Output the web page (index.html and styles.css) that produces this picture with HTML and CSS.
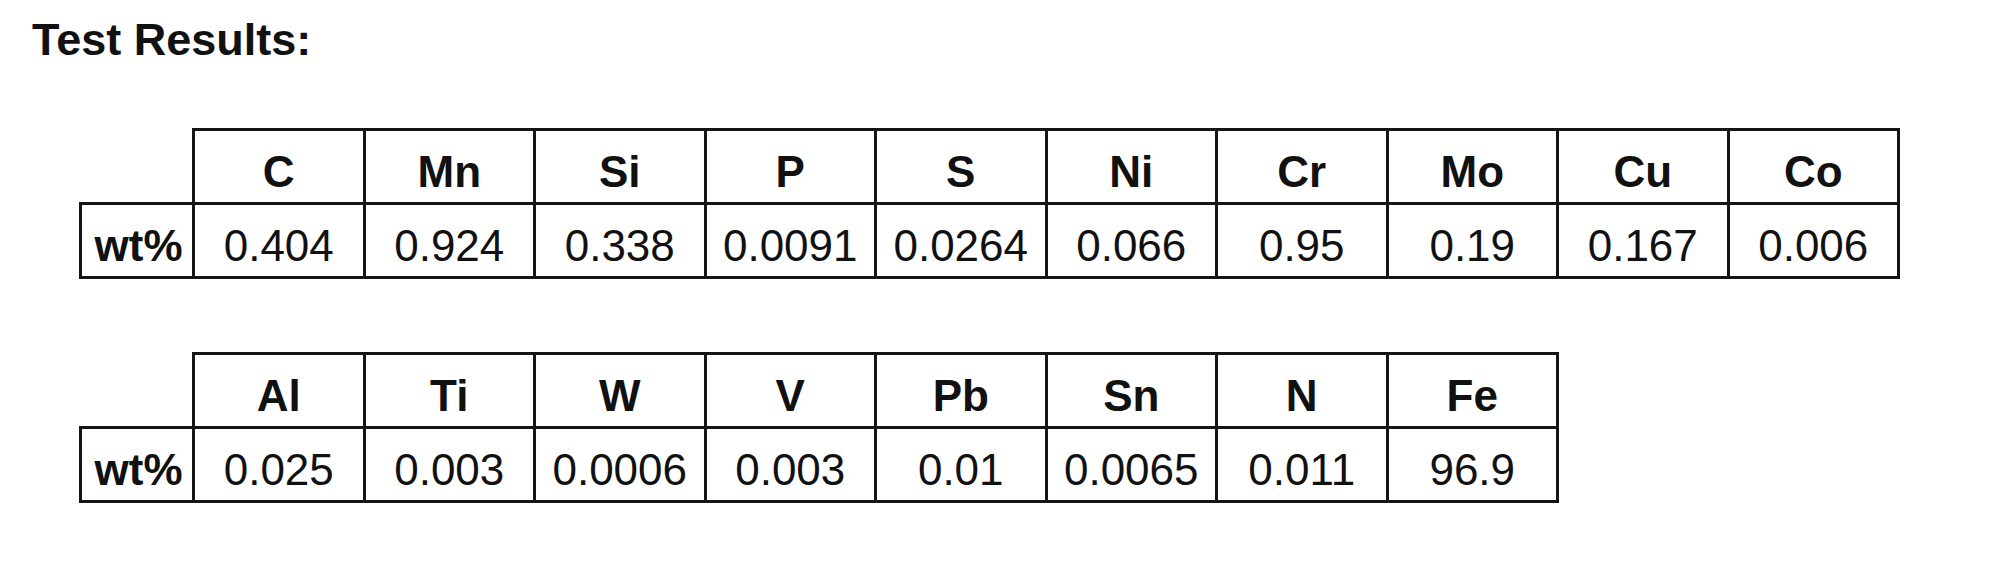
FILE: index.html
```html
<!DOCTYPE html>
<html lang="en">
<head>
<meta charset="utf-8">
<title>Test Results</title>
<link rel="stylesheet" href="styles.css">
</head>
<body>
<div class="page">
  <h1 class="title">Test Results:</h1>

  <table class="results results-first">
    <colgroup>
      <col class="col-label">
      <col class="col-el"><col class="col-el"><col class="col-el"><col class="col-el"><col class="col-el">
      <col class="col-el"><col class="col-el"><col class="col-el"><col class="col-el"><col class="col-el">
    </colgroup>
    <tr class="head-row">
      <th class="corner"></th>
      <th>C</th><th>Mn</th><th>Si</th><th>P</th><th>S</th>
      <th>Ni</th><th>Cr</th><th>Mo</th><th>Cu</th><th>Co</th>
    </tr>
    <tr class="value-row">
      <th class="row-label">wt%</th>
      <td>0.404</td><td>0.924</td><td>0.338</td><td>0.0091</td><td>0.0264</td>
      <td>0.066</td><td>0.95</td><td>0.19</td><td>0.167</td><td>0.006</td>
    </tr>
  </table>

  <table class="results results-second">
    <colgroup>
      <col class="col-label">
      <col class="col-el"><col class="col-el"><col class="col-el"><col class="col-el">
      <col class="col-el"><col class="col-el"><col class="col-el"><col class="col-el">
    </colgroup>
    <tr class="head-row">
      <th class="corner"></th>
      <th>Al</th><th>Ti</th><th>W</th><th>V</th>
      <th>Pb</th><th>Sn</th><th>N</th><th>Fe</th>
    </tr>
    <tr class="value-row">
      <th class="row-label">wt%</th>
      <td>0.025</td><td>0.003</td><td>0.0006</td><td>0.003</td>
      <td>0.01</td><td>0.0065</td><td>0.011</td><td>96.9</td>
    </tr>
  </table>
</div>
</body>
</html>
```

FILE: styles.css
```css
html, body {
  margin: 0;
  padding: 0;
  background: #ffffff;
}

body {
  font-family: "Liberation Sans", Arial, Helvetica, sans-serif;
  color: #111111;
}

.page {
  padding: 17px 0 0 32px;
}

.title {
  margin: 0;
  font-size: 45px;
  line-height: 45px;
  font-weight: bold;
  color: #111111;
}

.results {
  border-collapse: collapse;
  table-layout: fixed;
  margin-left: 47px;
  font-size: 44px;
  line-height: 44px;
}

.results-first {
  margin-top: 66px;
}

.results-second {
  margin-top: 73px;
}

.col-label {
  width: 113px;
}

.col-el {
  width: 170.5px;
}

.results th,
.results td {
  border: 3px solid #151515;
  padding: 0 0 8px 0;
  height: 63px;
  text-align: center;
  vertical-align: bottom;
  white-space: nowrap;
}

.results th {
  font-weight: bold;
}

.results td {
  font-weight: normal;
}

.results .corner {
  border-top: none;
  border-left: none;
  border-bottom: none;
}

.results .row-label {
  padding-left: 3px;
}
```
